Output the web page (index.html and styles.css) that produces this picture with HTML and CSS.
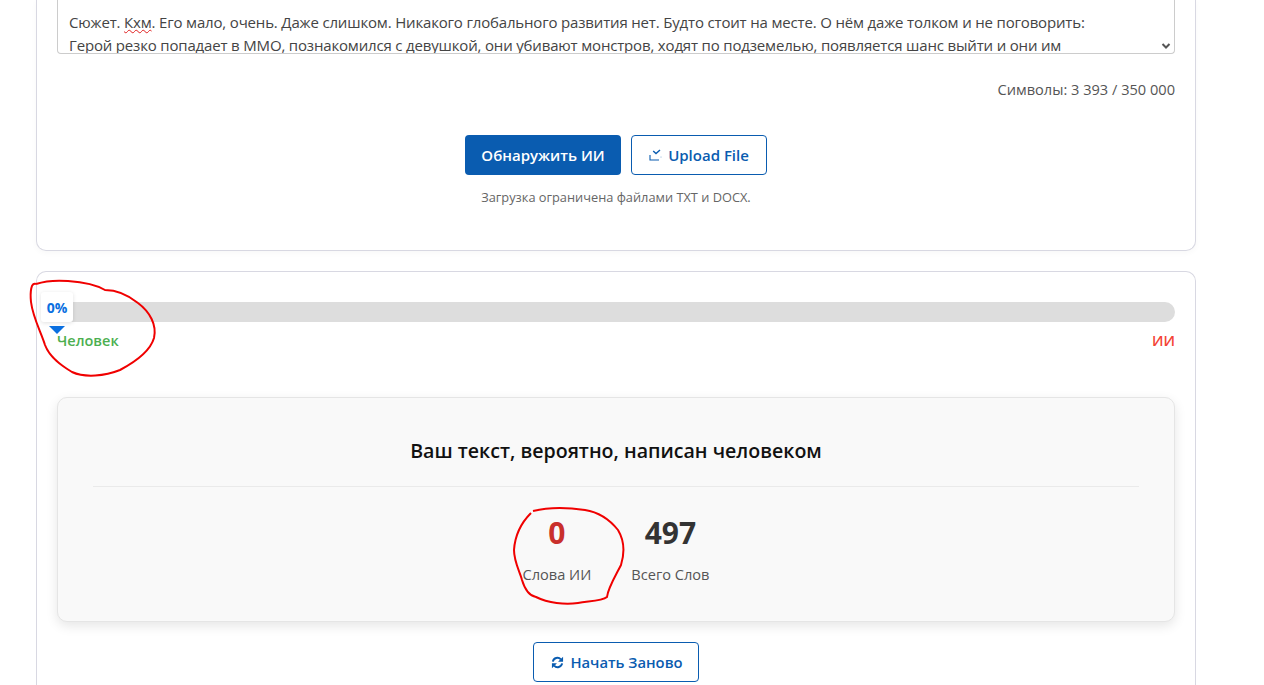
FILE: index.html
```html
<!DOCTYPE html>
<html lang="ru">
<head>
  <meta charset="UTF-8">
  <meta name="viewport" content="width=device-width, initial-scale=1.0">
  <title>Обнаружить ИИ</title>
  <link rel="stylesheet" href="styles.css">
</head>
<body>
  <div class="container">
    <div class="card card-input">
      <div class="text-box">
        <p class="text-line">Сюжет. <span class="misspelled">Кхм</span>. Его мало, очень. Даже слишком. Никакого глобального развития нет. Будто стоит на месте. О нём даже толком и не поговорить:</p>
        <p class="text-line">Герой резко попадает в ММО, познакомился с девушкой, они убивают монстров, ходят по подземелью, появляется шанс выйти и они им</p>
        <svg class="scroll-arrow" width="10" height="8" viewBox="0 0 10 8"><path d="M1.5 2 L5 5.5 L8.5 2" fill="none" stroke="#555" stroke-width="2"/></svg>
      </div>
      <div class="char-count">Символы: 3 393 / 350 000</div>
      <div class="actions">
        <button class="btn btn-primary">Обнаружить ИИ</button>
        <button class="btn btn-outline">
          <svg class="icon" width="13" height="12" viewBox="0 0 13 12"><path d="M1 6v5h9" fill="none" stroke="#0a5cb0" stroke-width="1.1"/><path d="M12 7.5v1.2" fill="none" stroke="#9dbfe0" stroke-width="1"/><path d="M4.2 2 L7 4.6 L11 1" fill="none" stroke="#0a5cb0" stroke-width="1.4"/></svg>
          Upload File
        </button>
      </div>
      <p class="hint">Загрузка ограничена файлами TXT и DOCX.</p>
    </div>

    <div class="card card-result">
      <div class="meter">
        <div class="meter-track"></div>
        <div class="meter-badge">0%</div>
        <div class="meter-pointer"></div>
        <div class="meter-labels">
          <span class="label-human">Человек</span>
          <span class="label-ai">ИИ</span>
        </div>
      </div>

      <div class="summary">
        <h2 class="summary-title">Ваш текст, вероятно, написан человеком</h2>
        <div class="stats">
          <div class="stat">
            <div class="stat-value stat-value-ai">0</div>
            <div class="stat-label">Слова ИИ</div>
          </div>
          <div class="stat">
            <div class="stat-value">497</div>
            <div class="stat-label">Всего Слов</div>
          </div>
        </div>
      </div>

      <div class="actions-restart">
        <button class="btn btn-outline btn-restart">
          <svg class="icon" width="13" height="13" viewBox="0 0 14 14"><path d="M2 6 A5 5 0 0 1 10.6 3.6 M12 8 A5 5 0 0 1 3.4 10.4" fill="none" stroke="#0a5cb0" stroke-width="2.1"/><path d="M13 .8v5.4H7.6z M1 13.2V7.8h5.4z" fill="#0a5cb0"/></svg>
          Начать Заново
        </button>
      </div>
    </div>
  </div>

  <!-- пометки от руки поверх скриншота -->
  <svg class="scribbles" width="1264" height="685" viewBox="0 0 1264 685">
    <path d="M36 284 C31 282 30 292 31 302 C33 318 41 332 45 345 C50 358 62 366 72 372 C85 378 105 376 120 370 C135 362 150 352 154 338 C157 325 150 312 138 303 C128 295 118 290 105 290 C95 284 82 282 68 281 C55 280 45 281 36 284" fill="none" stroke="#f00000" stroke-width="2"/>
    <path d="M531 513 C522 522 515 535 514 550 C514 562 520 572 522 580 C525 590 530 596 536 597 C548 603 565 605 578 603 C590 601 602 601 607 597 C608 588 616 575 621 565 C625 552 624 540 618 530 C610 520 598 512 585 510 C565 507 545 508 533 511" fill="none" stroke="#f00000" stroke-width="2"/>
  </svg>
</body>
</html>
```

FILE: styles.css
```css
* {
  margin: 0;
  padding: 0;
  box-sizing: border-box;
}

html, body {
  height: 685px;
  overflow: hidden;
}

body {
  font-family: 'Open Sans', 'Noto Sans', Arial, sans-serif;
  background: #fff;
  color: #333;
}

.container {
  width: 1160px;
  margin-left: 36px;
  display: flex;
  flex-direction: column;
  gap: 20px;
}

.card {
  background: #fff;
  border: 1px solid #d8d8e2;
  padding: 0 20px;
}

.card-input {
  height: 251px;
  border-top: none;
  border-radius: 0 0 10px 10px;
  box-shadow: 0 2px 6px rgba(0, 0, 0, 0.03);
}

.card-result {
  height: 420px;
  padding-top: 30px;
  border-bottom: none;
  border-radius: 10px 10px 0 0;
}

.text-box {
  position: relative;
  height: 54px;
  padding: 11px 11px 0;
  overflow: hidden;
  border: 1px solid #ccc;
  border-top: none;
  border-radius: 0 0 4px 4px;
  font-size: 15px;
  letter-spacing: -0.17px;
  line-height: 23px;
  color: #444;
}

.text-line {
  white-space: nowrap;
}

.misspelled {
  text-decoration: underline wavy #e02020 1px;
}

.scroll-arrow {
  position: absolute;
  right: 3px;
  bottom: 3px;
}

.char-count {
  margin-top: 23px;
  text-align: right;
  font-size: 14.6px;
  line-height: 24px;
  color: #555;
}

.actions {
  display: flex;
  justify-content: center;
  gap: 10px;
  margin-top: 34px;
}

.btn {
  display: inline-flex;
  align-items: center;
  justify-content: center;
  height: 40px;
  border-radius: 4px;
  font-family: inherit;
  font-size: 15px;
  font-weight: 600;
}

.btn-primary {
  width: 156px;
  background: #0a5cb0;
  border: none;
  color: #fff;
}

.btn-outline {
  width: 136px;
  gap: 6px;
  background: #fff;
  border: 1px solid #0a5cb0;
  color: #0a5cb0;
}

.hint {
  margin-top: 13px;
  text-align: center;
  font-size: 12.8px;
  line-height: 18px;
  color: #666;
}

.meter {
  position: relative;
  height: 95px;
}

.meter-track {
  height: 20px;
  background: #ddd;
  border-radius: 10px;
}

.meter-badge {
  position: absolute;
  left: -16px;
  top: -10px;
  width: 32px;
  height: 30px;
  background: #fff;
  border-radius: 3px;
  box-shadow: 0 1px 4px rgba(0, 0, 0, 0.12);
  text-align: center;
  font-size: 14px;
  font-weight: 700;
  line-height: 32px;
  color: #0a6fe0;
}

.meter-pointer {
  position: absolute;
  left: -8px;
  top: 24px;
  border-left: 8px solid transparent;
  border-right: 8px solid transparent;
  border-top: 8px solid #0a6fe0;
}

.meter-labels {
  display: flex;
  justify-content: space-between;
  margin-top: 8px;
  font-size: 14.5px;
  font-weight: 600;
  line-height: 22px;
}

.label-human {
  color: #4caf50;
}

.label-ai {
  color: #f44336;
}

.summary {
  height: 225px;
  padding: 38px 35px 0;
  background: #f9f9f9;
  border: 1px solid #e5e5e5;
  border-radius: 10px;
  box-shadow: 0 4px 12px rgba(0, 0, 0, 0.1);
}

.summary-title {
  padding-bottom: 20px;
  border-bottom: 1px solid #eaeaea;
  text-align: center;
  font-size: 19.6px;
  font-weight: 600;
  line-height: 30px;
  color: #111;
}

.stats {
  display: flex;
  justify-content: center;
  gap: 40px;
  margin-top: 26px;
}

.stat {
  text-align: center;
}

.stat-value {
  font-size: 30px;
  font-weight: 700;
  line-height: 40px;
  color: #333;
}

.stat-value-ai {
  color: #c9302c;
}

.stat-label {
  margin-top: 10px;
  font-size: 14.6px;
  line-height: 22px;
  color: #555;
}

.actions-restart {
  display: flex;
  justify-content: center;
  margin-top: 20px;
}

.btn-restart {
  width: 166px;
  padding-left: 2px;
  font-size: 14.8px;
}

.icon {
  flex-shrink: 0;
}

.scribbles {
  position: absolute;
  left: 0;
  top: 0;
  pointer-events: none;
}
```
